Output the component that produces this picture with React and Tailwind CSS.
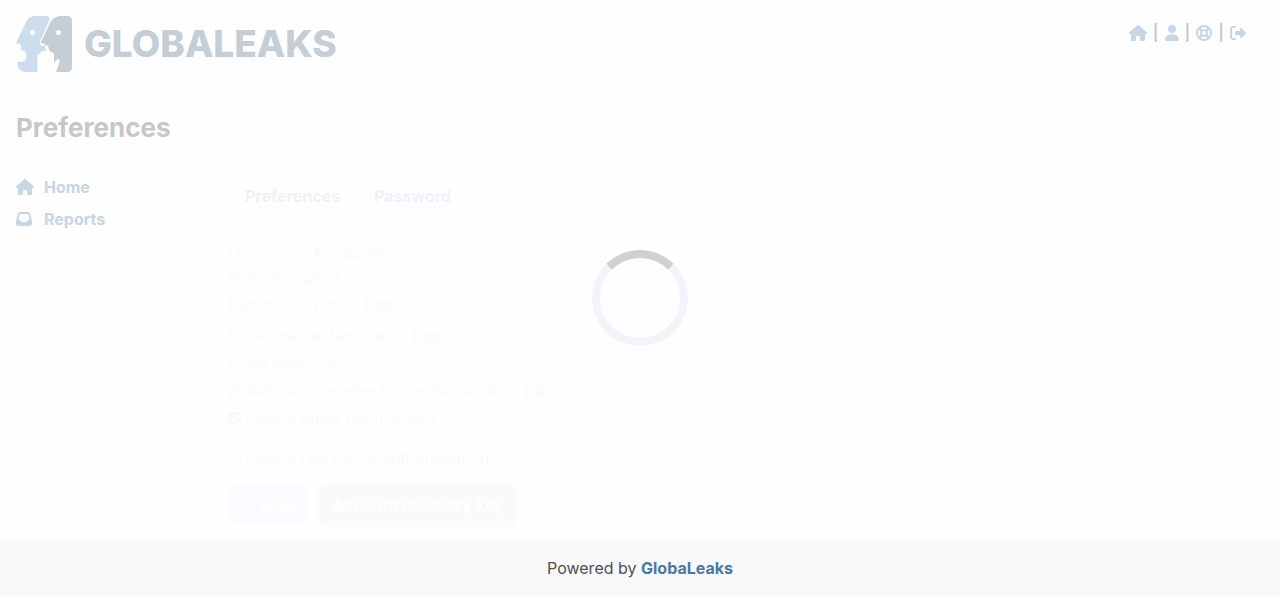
import { FaHouse, FaUser, FaRightFromBracket, FaInbox, FaCheck } from "react-icons/fa6";

function LifeRing({ className }) {
  return (
    <svg viewBox="0 0 16 16" className={className} fill="none" stroke="currentColor" strokeWidth="1.850" aria-hidden="true">
      <circle cx="8" cy="8" r="7.050" />
      <circle cx="8" cy="8" r="2.900" />
      <path d="M3 3 L6 6 M13 3 L10 6 M3 13 L6 10 M13 13 L10 10" strokeWidth="2.400" />
    </svg>
  );
}

function Logo() {
  return (
    <a href="#home" aria-label="GlobaLeaks home" className="flex items-center gap-3">
      <svg viewBox="0 0 56 56" className="h-14 w-14" aria-hidden="true">
        <path
          fill="#cedded"
          d="M20 0 H30 C33 0 34.500 2 33 5 L24.500 24 C23.500 26.500 23.500 28 25 29.500 H28.500 C29 32 30 33 30 35 H28 C24 35 25.500 38 21.500 39 V56 H10 C4 56 1 52 1.500 45.500 C6 47 10.500 45 10.500 40 C10.500 35.500 7.500 34.500 4.500 34 L5.500 31 L4 28 L0 27 L10 6 C12 2 15 0 20 0 Z"
        />
        <path
          fill="#c5cdd5"
          d="M47 0 H50 C54.500 0 56 2 56 5 V51 C56 54.500 54 56 51 56 H40 L43.500 46 C44.500 43.500 42 42 40 44.500 L38 47 V38 C38 36 34.500 36.500 33.500 34.500 C32.500 33 32.500 31 32 29 L29 30 L29 28 L24.500 27 L34 7 C37 1.500 41 0 47 0 Z"
        />
        <circle cx="16.500" cy="16.500" r="2.500" fill="#fff" />
        <circle cx="42.500" cy="16.500" r="2.500" fill="#fff" />
      </svg>
      <span className="text-[37px] leading-10 font-extrabold text-[#c5cdd5]">GLOBALEAKS</span>
    </a>
  );
}

const actions = [
  { label: "Home", Icon: FaHouse, size: "h-4 w-[18px]" },
  { label: "Preferences", Icon: FaUser, size: "h-4 w-[14px]" },
  { label: "Help", Icon: LifeRing, size: "size-4" },
  { label: "Log out", Icon: FaRightFromBracket, size: "size-4" },
];

function Header() {
  return (
    <header className="flex items-start justify-between p-4">
      <Logo />
      <nav aria-label="Account" className="mt-1 mr-[18px] flex items-center gap-[6px] text-[#c8d5e2]">
        {actions.map(({ label, Icon, size }, i) => (
          <div key={label} className="flex items-center gap-[6px]">
            {i > 0 && <span className="leading-6 font-semibold text-[#c7c7c9]">|</span>}
            <a href="#account" aria-label={label} className="pt-px">
              <Icon className={size} />
            </a>
          </div>
        ))}
      </nav>
    </header>
  );
}

function Sidebar() {
  return (
    <nav aria-label="Main" className="w-53 shrink-0 font-bold text-[#c8d5e2]">
      <a href="#home" className="flex h-8 items-center gap-2">
        <span className="w-5"><FaHouse className="h-4 w-[18px]" /></span>Home
      </a>
      <a href="#reports" className="flex h-8 items-center gap-2">
        <span className="w-5"><FaInbox className="size-4" /></span>Reports
      </a>
    </nav>
  );
}

function EditButton() {
  return (
    <button type="button" className="rounded border border-[#fafafa] px-2 py-1 text-sm leading-[21px] font-bold text-[#fafafa]">
      Edit
    </button>
  );
}

function Field({ children }) {
  return <div className="flex items-baseline gap-1">{children}<EditButton /></div>;
}

function Check({ label, checked }) {
  return (
    <label className="flex items-center gap-1">
      <input type="checkbox" defaultChecked={checked} className="peer sr-only" />
      <span className="flex size-[13px] items-center justify-center rounded-xs border border-[#fafafa] text-white peer-checked:border-[#f8f9fe] peer-checked:bg-[#f8f9fe]">
        {checked && <FaCheck className="size-[10px]" />}
      </span>
      {label}
    </label>
  );
}

function Preferences() {
  return (
    <section className="min-w-0 flex-1 pt-1">
      <div role="tablist" className="flex border-b border-[#fbfbfb] font-bold">
        <button type="button" role="tab" aria-selected="true" className="-mb-px rounded-t-md border border-b-0 border-[#fbfbfb] bg-[#fefefe] px-4 pt-2 pb-[9px] text-[#f0f1f3]">
          Preferences
        </button>
        <button type="button" role="tab" aria-selected="false" className="border border-b-0 border-transparent px-4 py-2 text-[#eff2f8]">
          Password
        </button>
      </div>
      <form className="mt-6 text-[#fafafa]" onSubmit={(e) => e.preventDefault()}>
        <div>Username: Recipient</div>
        <div>Role: Recipient</div>
        <Field>Name: Recipient</Field>
        <Field>Public name: Recipient</Field>
        <div>Email address:</div>
        <Field>globaleaks-receiver1@mailinator.com</Field>
        <div className="mb-4"><Check label="Enable email notifications" checked /></div>
        <Check label="Enable two factor authentication" />
        <div className="mt-4 flex gap-3 pb-4 font-bold text-white">
          <button type="submit" className="flex items-center gap-1 rounded-md bg-[#fafbfe] px-3 py-[7px] leading-6">
            <FaCheck className="h-4 w-[14px]" />Save
          </button>
          <button type="button" className="rounded-md bg-[#fafafa] px-3 py-[7px] leading-6 ring-4 ring-[#fcfcfc]">
            Account recovery key
          </button>
        </div>
      </form>
    </section>
  );
}

export default function App() {
  return (
    <div className="flex min-h-screen flex-col bg-[#fefefe] font-['Inter',sans-serif] text-base">
      <Header />
      <main className="flex-1 px-4">
        <h1 className="mt-5 text-[26px] leading-10 font-bold text-[#c7c7c9]">Preferences</h1>
        <div className="mt-[23px] flex">
          <Sidebar />
          <Preferences />
        </div>
      </main>
      <footer className="bg-[#f8f9fb] p-4 text-center text-[#4f4f52]">
        Powered by <a href="#globaleaks" className="font-bold text-[#4b77a3]">GlobaLeaks</a>
      </footer>
      <div role="status" aria-label="Loading" className="pointer-events-none fixed inset-0 flex items-center justify-center">
        <div className="size-24 rounded-full border-8 border-[#f3f4fa] border-t-[#d0d0d0]" />
      </div>
    </div>
  );
}
